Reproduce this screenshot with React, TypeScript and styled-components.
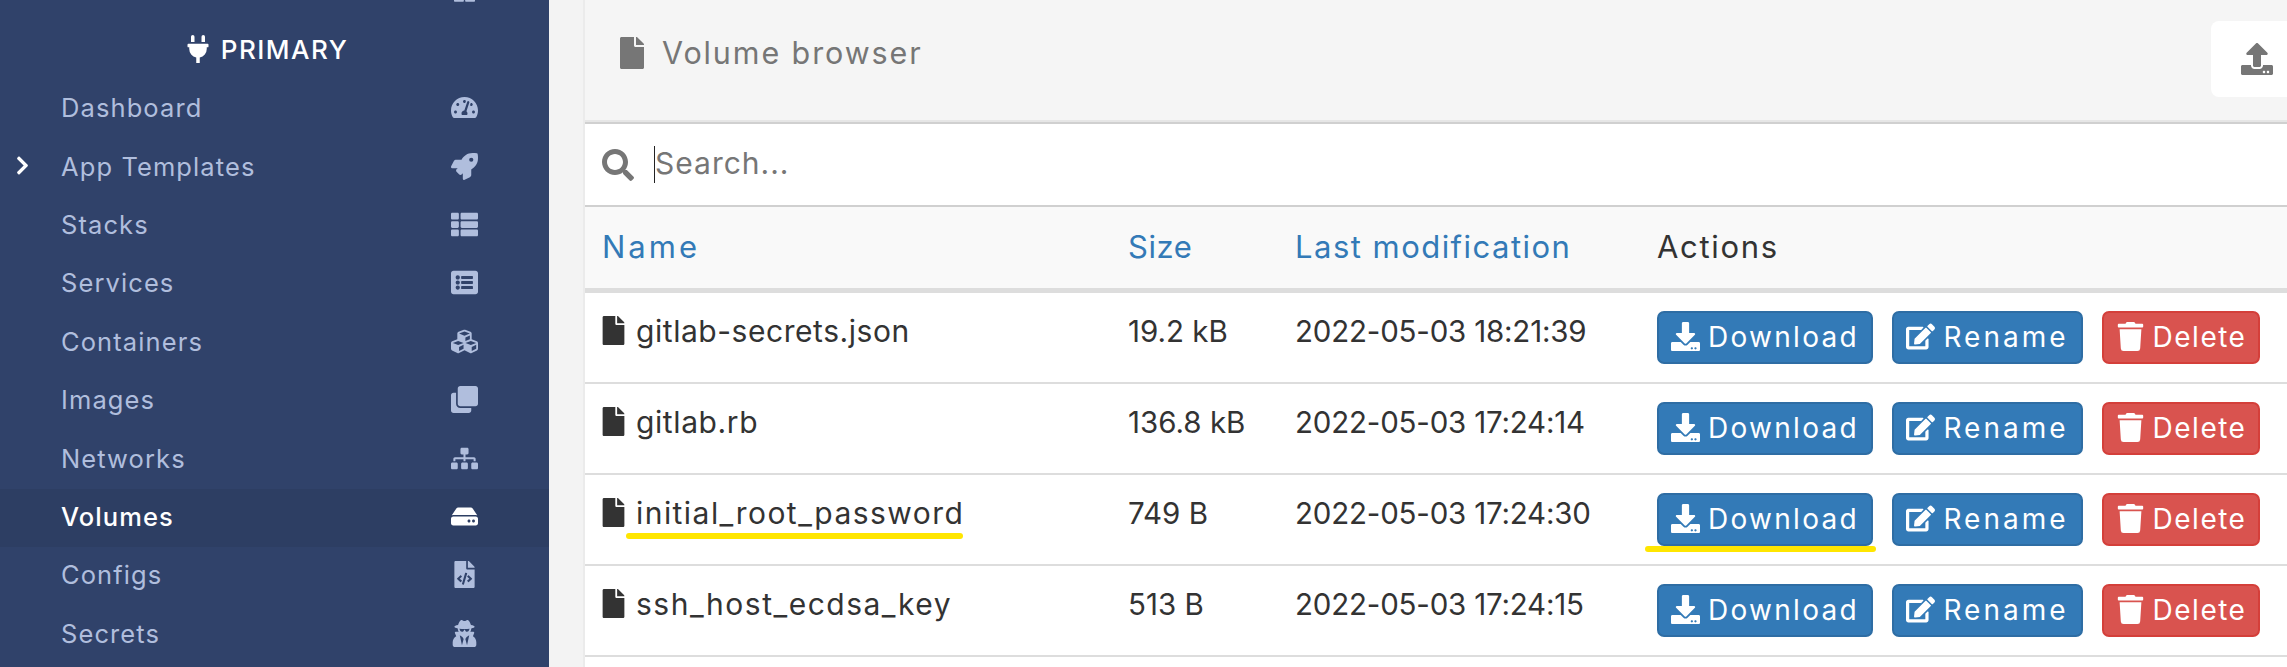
import React from 'react';
import styled, { createGlobalStyle } from 'styled-components';
import {
  FaChevronRight, FaClone, FaCubes, FaDownload, FaEdit, FaFile, FaFileCode, FaHdd, FaListAlt,
  FaPlug, FaRocket, FaSearch, FaSitemap, FaTachometerAlt, FaThLarge, FaThList, FaTrash, FaUpload, FaUserSecret,
} from 'react-icons/fa';

const Global = createGlobalStyle`
  html, body { margin: 0; padding: 0; background: #f3f3f3; }
  body { font-family: Inter, "Open Sans", sans-serif; }
`;

const Page = styled.div`
  display: flex;
  width: 2287px;
  height: 667px;
  overflow: hidden;
`;

const Sidebar = styled.aside`
  flex: 0 0 549px;
  background: #30426a;
  color: #b0bedd;
  overflow: hidden;
`;

const ClippedRow = styled.div`
  height: 3px;
  overflow: hidden;
  display: flex;
  justify-content: flex-end;
  align-items: flex-end;
  padding-right: 74px;
  svg { width: 21px; height: 21px; flex: none; }
`;

const Title = styled.div`
  height: 61px;
  box-sizing: border-box;
  margin-top: 16px;
  padding: 0 17px 1px 0;
  display: flex;
  justify-content: center;
  align-items: center;
  gap: 9px;
  color: #fff;
  font-size: 26px;
  font-weight: 500;
  letter-spacing: 1.5px;
  svg { height: 28px; width: auto; }
`;

const NavList = styled.ul`
  margin: 0;
  padding: 0;
  list-style: none;
`;

const NavItem = styled.li<{ $active?: boolean }>`
  position: relative;
  height: 58.4px;
  box-sizing: border-box;
  padding-bottom: 3px;
  display: flex;
  align-items: center;
  justify-content: space-between;
  padding-left: 61px;
  font-size: 25.5px;
  letter-spacing: 1.1px;
  background: ${(p) => (p.$active ? '#2d3e63' : 'transparent')};
  color: ${(p) => (p.$active ? '#fff' : '#b0bedd')};
  font-weight: ${(p) => (p.$active ? 500 : 400)};
`;

const NavIcon = styled.span`
  width: 60px;
  margin-right: 55px;
  display: flex;
  justify-content: center;
  svg { height: 27px; width: auto; }
`;

const Chevron = styled.span`
  position: absolute;
  left: 12px;
  top: 17px;
  display: flex;
  color: #fff;
  svg { height: 21px; width: auto; }
`;

const Main = styled.main`
  flex: 1;
  min-width: 0;
  padding-left: 34px;
  overflow: hidden;
`;

const Panel = styled.section`
  height: 100%;
  border-left: 2px solid #ebebeb;
  background: #fff;
`;

const PanelHeader = styled.header`
  height: 99px;
  padding-top: 21px;
  display: flex;
  align-items: flex-start;
  background: #f5f5f5;
  border-bottom: 2px solid #e6e6e6;
  overflow: hidden;
`;

const HeaderTitle = styled.h1`
  margin: 16px 0 0 31px;
  display: flex;
  align-items: center;
  gap: 14px;
  font-size: 30.5px;
  font-weight: 400;
  letter-spacing: 1.9px;
  line-height: 32px;
  color: #767676;
  svg { height: 32px; width: auto; }
`;

const UploadButton = styled.button`
  margin-left: auto;
  margin-right: -24px;
  flex: 0 0 100px;
  height: 76px;
  padding: 0 0 0 30px;
  display: flex;
  align-items: center;
  border: 0;
  border-radius: 8px;
  background: #fff;
  color: #767676;
  svg { width: 32px; height: 32px; }
`;

const SearchBar = styled.div`
  height: 83px;
  box-sizing: border-box;
  display: flex;
  align-items: center;
  padding-left: 17px;
  border-top: 2px solid #d0d0d0;
  background: #fff;
  color: #767676;
  svg { width: 32px; height: 32px; }
`;

const Caret = styled.span`
  width: 1px;
  height: 37px;
  margin-left: 20px;
  background: #222;
`;

const SearchInput = styled.input`
  flex: 1;
  border: 0;
  outline: 0;
  padding: 0;
  margin-bottom: 3px;
  background: transparent;
  font: 400 30px Inter, sans-serif;
  letter-spacing: 1px;
  color: #333;
  &::placeholder { color: #767676; opacity: 1; }
`;

const Table = styled.table`
  width: 100%;
  table-layout: fixed;
  border-collapse: separate;
  border-spacing: 0;
  border-top: 2px solid #d0d0d0;
  color: #333;
`;

const HeadCell = styled.th<{ $w?: number; $link?: boolean; $ls: number }>`
  width: ${(p) => (p.$w ? `${p.$w}px` : 'auto')};
  height: 86px;
  box-sizing: border-box;
  padding: 0 0 3px 17px;
  background: #f9f9f9;
  border-bottom: 5px solid #ddd;
  text-align: left;
  font-size: 31px;
  font-weight: 400;
  letter-spacing: ${(p) => p.$ls}px;
  color: ${(p) => (p.$link ? '#337ab7' : '#333')};
`;

const Cell = styled.td`
  height: 91px;
  box-sizing: border-box;
  padding: 15px 0 0 17px;
  vertical-align: top;
  border-bottom: 2px solid #ddd;
  font-size: 29.5px;
  line-height: 46px;
`;

const DateCell = styled(Cell)`
  letter-spacing: -0.2px;
`;

const ActionCell = styled(Cell)`
  padding-top: 18px;
`;

const NameWrap = styled.span<{ $ls: number }>`
  position: relative;
  margin-left: -3px;
  display: flex;
  align-items: flex-start;
  gap: 8px;
  white-space: nowrap;
  font-size: 30px;
  letter-spacing: ${(p) => p.$ls}px;
  svg { height: 29px; width: auto; margin-top: 8px; flex: none; }
`;

const Actions = styled.div`
  display: flex;
  gap: 19px;
`;

const ActionButton = styled.button<{ $w: number; $ls: number; $danger?: boolean }>`
  position: relative;
  flex: 0 0 ${(p) => p.$w}px;
  height: 53px;
  padding: 0 0 2px;
  display: flex;
  align-items: center;
  justify-content: center;
  gap: 8px;
  border: 2px solid ${(p) => (p.$danger ? '#d43f3a' : '#2e6da4')};
  border-radius: 7px;
  background: ${(p) => (p.$danger ? '#d9534f' : '#337ab7')};
  color: #fff;
  font: 400 28px Inter, sans-serif;
  letter-spacing: ${(p) => p.$ls}px;
  svg { height: 29px; width: auto; flex: none; }
`;

const Highlight = styled.span<{ $left: number; $width: number; $bottom: number }>`
  position: absolute;
  left: ${(p) => p.$left}px;
  width: ${(p) => p.$width}px;
  bottom: ${(p) => p.$bottom}px;
  height: 6px;
  border-radius: 3px;
  background: #ffe600;
`;

const items = [
  { label: 'Dashboard', icon: <FaTachometerAlt /> },
  { label: 'App Templates', icon: <FaRocket />, chevron: true },
  { label: 'Stacks', icon: <FaThList /> },
  { label: 'Services', icon: <FaListAlt /> },
  { label: 'Containers', icon: <FaCubes /> },
  { label: 'Images', icon: <FaClone /> },
  { label: 'Networks', icon: <FaSitemap /> },
  { label: 'Volumes', icon: <FaHdd />, active: true },
  { label: 'Configs', icon: <FaFileCode /> },
  { label: 'Secrets', icon: <FaUserSecret /> },
];

const files = [
  { name: 'gitlab-secrets.json', size: '19.2 kB', date: '2022-05-03 18:21:39', ls: 0.55 },
  { name: 'gitlab.rb', size: '136.8 kB', date: '2022-05-03 17:24:14', ls: 0.6 },
  { name: 'initial_root_password', size: '749 B', date: '2022-05-03 17:24:30', ls: 1.45, marked: true },
  { name: 'ssh_host_ecdsa_key', size: '513 B', date: '2022-05-03 17:24:15', ls: 1.5 },
];

export default function App() {
  return (
    <>
      <Global />
      <Page>
        <Sidebar>
          <ClippedRow><FaThLarge /></ClippedRow>
          <Title><FaPlug />PRIMARY</Title>
          <NavList>
            {items.map((it) => (
              <NavItem key={it.label} $active={it.active}>
                {it.chevron && <Chevron><FaChevronRight /></Chevron>}
                {it.label}
                <NavIcon>{it.icon}</NavIcon>
              </NavItem>
            ))}
          </NavList>
        </Sidebar>
        <Main>
          <Panel>
            <PanelHeader>
              <HeaderTitle><FaFile />Volume browser</HeaderTitle>
              <UploadButton aria-label="Upload"><FaUpload /></UploadButton>
            </PanelHeader>
            <SearchBar>
              <FaSearch />
              <Caret />
              <SearchInput placeholder="Search..." />
            </SearchBar>
            <Table>
              <thead>
                <tr>
                  <HeadCell $w={526} $link $ls={3}>Name</HeadCell>
                  <HeadCell $w={167} $link $ls={0.6}>Size</HeadCell>
                  <HeadCell $w={362} $link $ls={1.47}>Last modification</HeadCell>
                  <HeadCell $ls={1.7}>Actions</HeadCell>
                </tr>
              </thead>
              <tbody>
                {files.map((f) => (
                  <tr key={f.name}>
                    <Cell>
                      <NameWrap $ls={f.ls}>
                        <FaFile />
                        {f.name}
                        {f.marked && <Highlight $left={27} $width={337} $bottom={-3} />}
                      </NameWrap>
                    </Cell>
                    <Cell>{f.size}</Cell>
                    <DateCell>{f.date}</DateCell>
                    <ActionCell>
                      <Actions>
                        <ActionButton $w={216} $ls={2.3}>
                          <FaDownload />Download
                          {f.marked && <Highlight $left={-14} $width={231} $bottom={-8} />}
                        </ActionButton>
                        <ActionButton $w={191} $ls={3}><FaEdit />Rename</ActionButton>
                        <ActionButton $w={158} $ls={1.5} $danger><FaTrash />Delete</ActionButton>
                      </Actions>
                    </ActionCell>
                  </tr>
                ))}
              </tbody>
            </Table>
          </Panel>
        </Main>
      </Page>
    </>
  );
}
